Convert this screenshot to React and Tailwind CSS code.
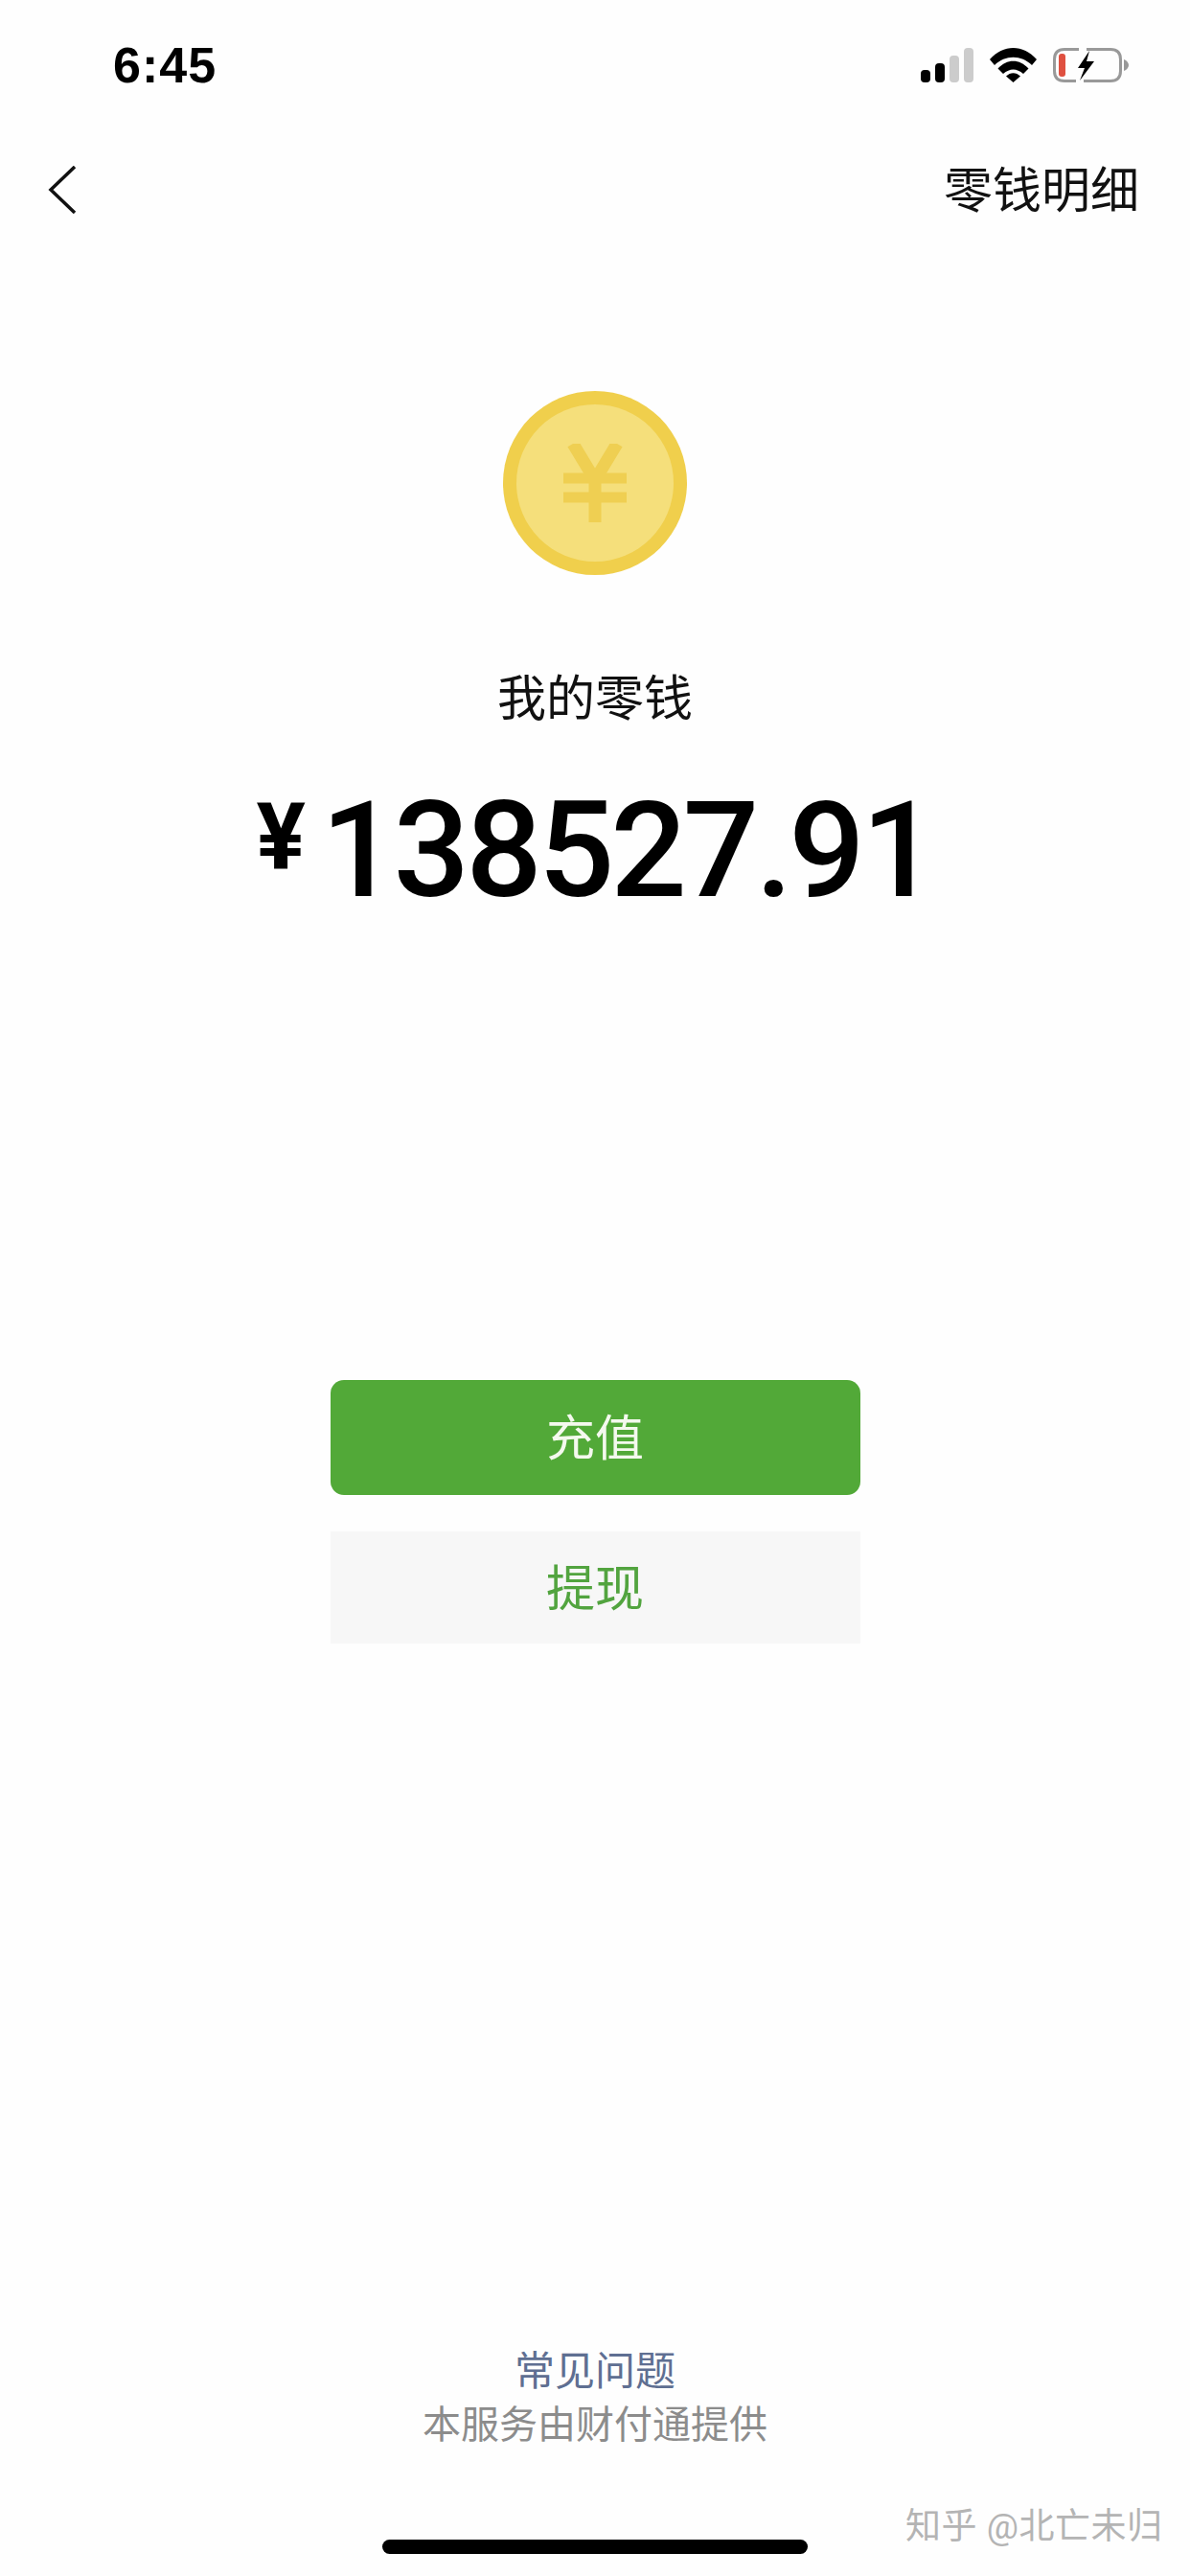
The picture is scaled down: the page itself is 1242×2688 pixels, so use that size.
const cjk = "font-['Roboto','Noto_Sans_CJK_SC',sans-serif]";

function StatusIcons() {
  return (
    <div className="flex items-center gap-[17px]">
      <svg width="55" height="36" viewBox="0 0 55 36">
        <rect x="0" y="23" width="10" height="13" rx="4" fill="#000" />
        <rect x="15" y="16" width="10" height="20" rx="4" fill="#000" />
        <rect x="30" y="8" width="10" height="28" rx="4" fill="#ccc" />
        <rect x="45" y="0" width="10" height="36" rx="4" fill="#ccc" />
      </svg>
      <svg width="49" height="36" viewBox="0 0 49 36">
        <path d="M0 12C14 -4 35 -4 49 12L44 18C33 7 16 7 5 18Z" fill="#000" />
        <path d="M8.500 21.500C18 11 31 11 40.500 21.500L35 27C28 21 21 21 14 27Z" fill="#000" />
        <path d="M17 29.500C21.500 25 27.500 25 32 29.500L24.500 36Z" fill="#000" />
      </svg>
      <svg width="80" height="36" viewBox="0 0 80 36">
        <path d="M27 1.500H12C5 1.500 1.500 5 1.500 12V24C1.500 31 5 34.500 12 34.500H24M35 1.500H60C67 1.500 70.500 5 70.500 12V24C70.500 31 67 34.500 60 34.500H32" fill="none" stroke="#999" strokeWidth="3" />
        <rect x="6" y="6" width="7" height="24" rx="3" fill="#df5040" />
        <path d="M38 3L26 21H33L28 34L43 14H35Z" fill="#000" />
        <path d="M74 12C77 13 79 15.500 79 18C79 20.500 77 23 74 24Z" fill="#999" />
      </svg>
    </div>
  );
}

function Coin() {
  return (
    <div className="w-[192px] h-[192px] rounded-full bg-[#f0cf4c] flex items-center justify-center">
      <div className="w-[164px] h-[164px] rounded-full bg-[#f5df7b] flex items-center justify-center">
        <svg width="66" height="82" viewBox="0 0 66 82">
          <path d="M10 0L33 38L56 0" fill="none" stroke="#efcf52" strokeWidth="13" />
          <path d="M0 36H66M0 56H66" stroke="#efcf52" strokeWidth="11" />
          <path d="M33 34V82" stroke="#efcf52" strokeWidth="13" />
        </svg>
      </div>
    </div>
  );
}

export default function App() {
  return (
    <div className={`relative w-[1242px] h-[2688px] bg-[#fefefe] overflow-hidden flex flex-col ${cjk}`}>
      <div className="flex items-center justify-between pl-[118px] pr-[63px] pt-[49px] h-[87px]">
        <span className="font-['Liberation_Sans',sans-serif] font-bold text-[52px] leading-none tracking-[1px] text-black">6:45</span>
        <StatusIcons />
      </div>

      <div className="flex items-start justify-between pl-[50px] pr-[53px] mt-[85px]">
        <svg width="30" height="50" viewBox="0 0 30 50" className="mt-[1px]">
          <path d="M28 1L3 25L28 49" fill="none" stroke="#111" strokeWidth="3.500" />
        </svg>
        <span className="mt-[2px] text-[51px] leading-none text-[#111]">零钱明细</span>
      </div>

      <div className="flex flex-col items-center mt-[183px]">
        <Coin />
        <span className="mt-[104px] text-[51px] leading-none text-[#111]">我的零钱</span>
        <div className="mt-[64px] flex items-start text-black font-['Roboto',sans-serif]">
          <span className="text-[96px] leading-none font-bold mr-[16px] mt-[6px]">¥</span>
          <span className="mt-[8px] text-[140px] leading-[120px] font-medium tracking-[-4px]">138527.91</span>
        </div>
      </div>

      <div className="flex flex-col items-center gap-[38px] mt-[493px]">
        <div className="w-[553px] h-[120px] pt-[3px] rounded-[14px] bg-[#52a938] flex items-center justify-center text-[51px] leading-none text-[#f4f9ee]">
          充值
        </div>
        <div className="w-[553px] h-[117px] pt-[3px] bg-[#f7f7f7] flex items-center justify-center text-[51px] leading-none text-[#52a43f]">
          提现
        </div>
      </div>

      <div className="flex flex-col items-center mt-auto pb-[137px]">
        <span className="text-[42px] leading-none text-[#5f6f92]">常见问题</span>
        <span className="mt-[15px] text-[40px] leading-none text-[#8c8c8c]">本服务由财付通提供</span>
      </div>

      <div className="absolute left-[399px] bottom-[23px] w-[444px] h-[15px] rounded-full bg-black" />
      <span className="absolute left-[945px] top-[2618px] text-[37px] tracking-[0.5px] leading-none text-[#b4b4b4] whitespace-nowrap">
        知乎 @北亡未归
      </span>
    </div>
  );
}
